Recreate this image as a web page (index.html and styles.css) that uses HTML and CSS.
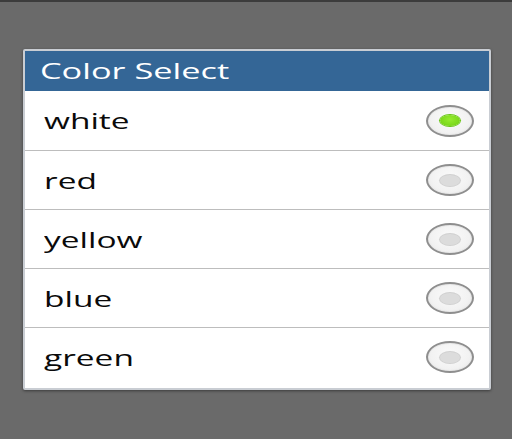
FILE: index.html
```html
<!DOCTYPE html>
<html>
<head>
<meta charset="utf-8">
<link rel="stylesheet" href="styles.css">
</head>
<body>
<div class="screen">
  <div class="dialog">
    <div class="title"><span class="wide">Color Select</span></div>
    <ul class="list">
      <li class="row"><span class="wide label">white</span><span class="radio checked"><span class="dot"></span></span></li>
      <li class="row"><span class="wide label">red</span><span class="radio"><span class="dot"></span></span></li>
      <li class="row"><span class="wide label">yellow</span><span class="radio"><span class="dot"></span></span></li>
      <li class="row"><span class="wide label">blue</span><span class="radio"><span class="dot"></span></span></li>
      <li class="row"><span class="wide label">green</span><span class="radio"><span class="dot"></span></span></li>
    </ul>
  </div>
</div>
</body>
</html>
```

FILE: styles.css
```css
html, body {
  margin: 0;
  padding: 0;
  height: 100%;
}
body {
  background: #6a6a6a;
  font-family: "Open Sans", "DejaVu Sans", sans-serif;
  overflow: hidden;
}
.screen {
  border-top: 2px solid #3c3c3c;
  padding: 47px 21px 0 23px;
}
.dialog {
  width: 464px;
  border: 2px solid #c9cdd3;
  border-radius: 2px;
  background: #fff;
  box-shadow: 0 1px 3px rgba(0,0,0,0.45);
}
.title {
  height: 40px;
  background: #346696;
  color: #fff;
  font-size: 22px;
  display: flex;
  align-items: center;
  padding-left: 15px;
}
.title .wide {
  transform: scaleX(1.56);
  margin-top: -3px;
}
.wide {
  display: inline-block;
  transform: scaleX(1.52);
  transform-origin: left center;
  white-space: nowrap;
}
.list {
  list-style: none;
  margin: 0;
  padding: 0 0 2px;
}
.row {
  height: 59px;
  display: flex;
  align-items: center;
  justify-content: space-between;
  padding: 0 15px 0 19px;
  box-sizing: border-box;
  border-top: 1px solid #bdbdbd;
  color: #0a0a0a;
  font-size: 22px;
}
.row:first-child {
  border-top: none;
}
.label {
  margin-top: -1px;
}
.radio {
  width: 44px;
  height: 28px;
  border: 2px solid #8e8e8e;
  border-radius: 50%;
  background: radial-gradient(ellipse at 50% 40%, #fafafa 0%, #f2f2f2 60%, #e4e4e4 100%);
  box-shadow: inset 0 0 0 1px #e8e8e8;
  display: flex;
  align-items: center;
  justify-content: center;
}
.dot {
  width: 20px;
  height: 11px;
  border-radius: 50%;
  background: #dcdcdc;
  box-shadow: 0 0 0 1px #d0d0d0;
}
.checked .dot {
  background: radial-gradient(ellipse at 50% 40%, #95ec2f 0%, #7ad71a 70%, #5fbd10 100%);
  box-shadow: 0 0 0 1px #66c413;
}
```
